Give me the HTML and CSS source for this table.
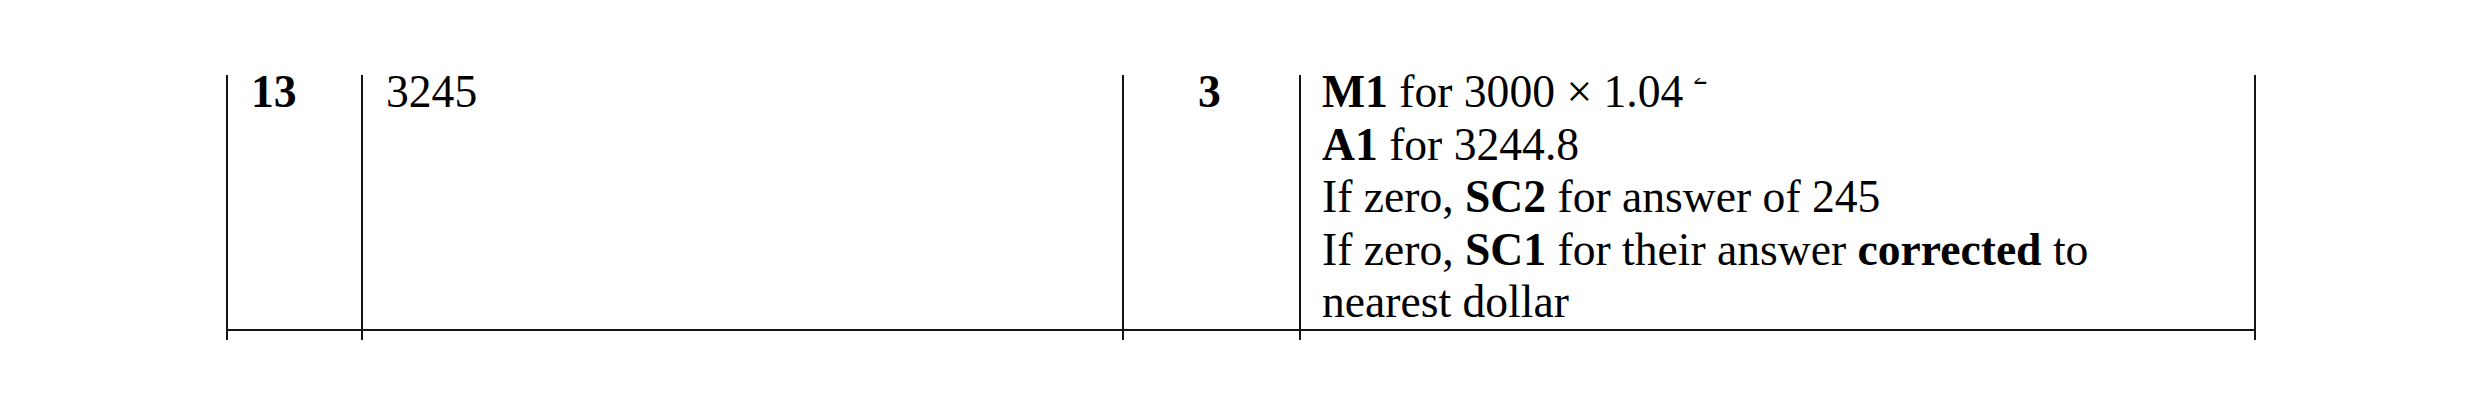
FILE: index.html
```html
<!DOCTYPE html>
<html lang="en">
<head>
<meta charset="utf-8">
<title>Mark scheme row</title>
<link rel="stylesheet" href="styles.css">
</head>
<body>
<div class="page">
  <div class="table">
    <div class="cell q"><div class="txt"><b>13</b></div></div>
    <div class="cell ans"><div class="txt">3245</div></div>
    <div class="cell marks"><div class="txt"><b>3</b></div></div>
    <div class="cell guide"><div class="txt">
      <div><b>M1</b> for 3000 × 1.04<span class="sup-clip"><span class="sup-in">2</span></span></div>
      <div><b>A1</b> for 3244.8</div>
      <div>If zero, <b>SC2</b> for answer of 245</div>
      <div>If zero, <b>SC1</b> for their answer <b>corrected</b> to nearest dollar</div>
    </div></div>
    <div class="cell next"></div>
    <div class="cell next"></div>
    <div class="cell next"></div>
    <div class="cell next last"></div>
  </div>
</div>
</body>
</html>
```
FILE: styles.css
```css
html, body {
  margin: 0;
  padding: 0;
  background: #ffffff;
}
body {
  width: 2480px;
  height: 415px;
  overflow: hidden;
  font-family: "Liberation Serif", "Times New Roman", serif;
  color: #000;
}
.page {
  padding-top: 75px;
}
.table {
  margin-left: 226px;
  width: 2030px;
  display: grid;
  grid-template-columns: 135px 761px 177px 957px;
  grid-template-rows: auto 9px;
}
.cell {
  box-sizing: border-box;
  border-left: 2px solid #141414;
  font-size: 45.6px;
  line-height: 52.5px;
}
.q, .ans, .marks, .guide {
  border-bottom: 2px solid #141414;
}
.guide, .last {
  border-right: 2px solid #141414;
}
.txt {
  margin-top: -8.6px;
}
.q { padding-left: 23px; }
.ans { padding-left: 23px; }
.marks { text-align: center; padding-right: 4px; }
.guide { padding-left: 21px; }
.guide .txt {
  width: 830px;
}
b { font-weight: bold; }
.sup-clip {
  display: inline-block;
  width: 16px;
  height: 7px;
  overflow: hidden;
  vertical-align: 22px;
  margin-left: 10px;
}
.sup-in {
  display: block;
  font-size: 29px;
  line-height: 29px;
  margin-top: -18px;
}
.next {
  height: 9px;
}
```
